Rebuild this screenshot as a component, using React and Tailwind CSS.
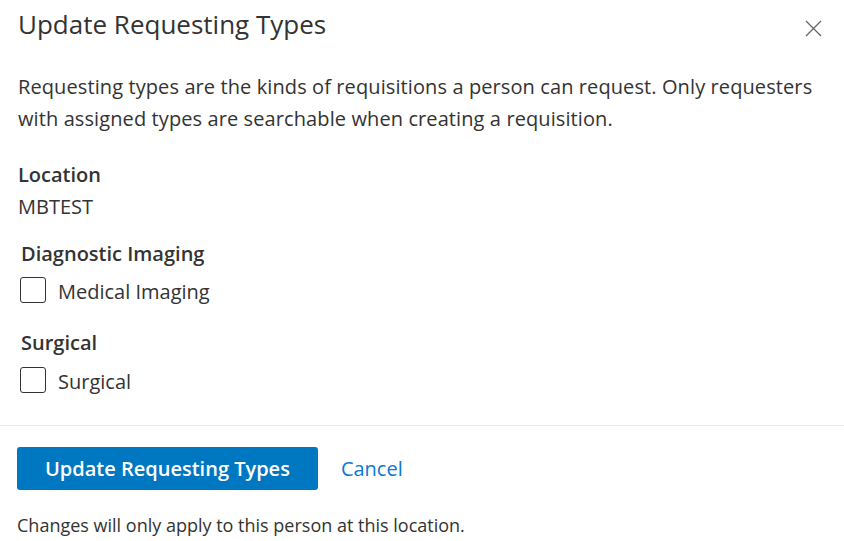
import React, { useState } from "react";

const font = { fontFamily: '"Open Sans", "Noto Sans", sans-serif' };

function CheckRow({ label, checked, onChange }) {
  return (
    <label className="flex items-center gap-3 cursor-pointer -ml-[1px]">
      <span
        className={
          "w-[26px] h-[26px] rounded-[3px] border border-[#333] flex items-center justify-center " +
          (checked ? "bg-[#0078c1] border-[#0078c1]" : "bg-white")
        }
        onClick={onChange}
      >
        {checked && (
          <svg width="16" height="16" viewBox="0 0 16 16" fill="none">
            <path d="M3 8.5l3 3 7-7" stroke="white" strokeWidth="2" />
          </svg>
        )}
      </span>
      <span className="text-[20px] text-[#333] h-[26px] leading-[30px]">{label}</span>
    </label>
  );
}

export default function App() {
  const [medical, setMedical] = useState(false);
  const [surgical, setSurgical] = useState(false);

  return (
    <div className="w-[844px] h-[541px] bg-white text-[#333] overflow-hidden" style={font}>
      <div className="px-[18px]">
        <div className="flex items-start justify-between pt-[6px]">
          <h1 className="text-[26px] leading-[36px] font-normal text-[#333]">
            Update Requesting Types
          </h1>
          <button className="mt-[14px] mr-[4px] text-[#555]">
            <svg width="17" height="17" viewBox="0 0 17 17" fill="none">
              <path d="M1 1l15 15M16 1L1 16" stroke="#666" strokeWidth="1.3" />
            </svg>
          </button>
        </div>

        <p className="mt-[29px] text-[20px] leading-[32px] text-[#333] tracking-[0.1px]">
          Requesting types are the kinds of requisitions a person can request. Only requesters
          with assigned types are searchable when creating a requisition.
        </p>

        <div className="mt-[24px]">
          <div className="text-[20px] leading-[32px] font-semibold">Location</div>
          <div className="text-[20px] leading-[32px]">MBTEST</div>
        </div>

        <div className="pl-[3px] mt-[15px] flex flex-col">
          <div className="text-[20px] leading-[32px] font-semibold">Diagnostic Imaging</div>
          <div className="mt-[7px]">
            <CheckRow label="Medical Imaging" checked={medical} onChange={() => setMedical(!medical)} />
          </div>
          <div className="text-[20px] leading-[32px] font-semibold mt-[24px]">Surgical</div>
          <div className="mt-[8px]">
            <CheckRow label="Surgical" checked={surgical} onChange={() => setSurgical(!surgical)} />
          </div>
        </div>
      </div>

      <div className="mt-[32px] border-t border-[#e6e6e6]" />

      <div className="px-[17px] pt-[21px]">
        <div className="flex items-center gap-[23px]">
          <button className="h-[43px] px-[28px] bg-[#0078c1] text-white text-[20px] font-semibold rounded-[3px]">
            Update Requesting Types
          </button>
          <button className="text-[20px] text-[#0a78d6]">Cancel</button>
        </div>
        <p className="mt-[23px] text-[18px] leading-[24px] text-[#333]">
          Changes will only apply to this person at this location.
        </p>
      </div>
    </div>
  );
}
